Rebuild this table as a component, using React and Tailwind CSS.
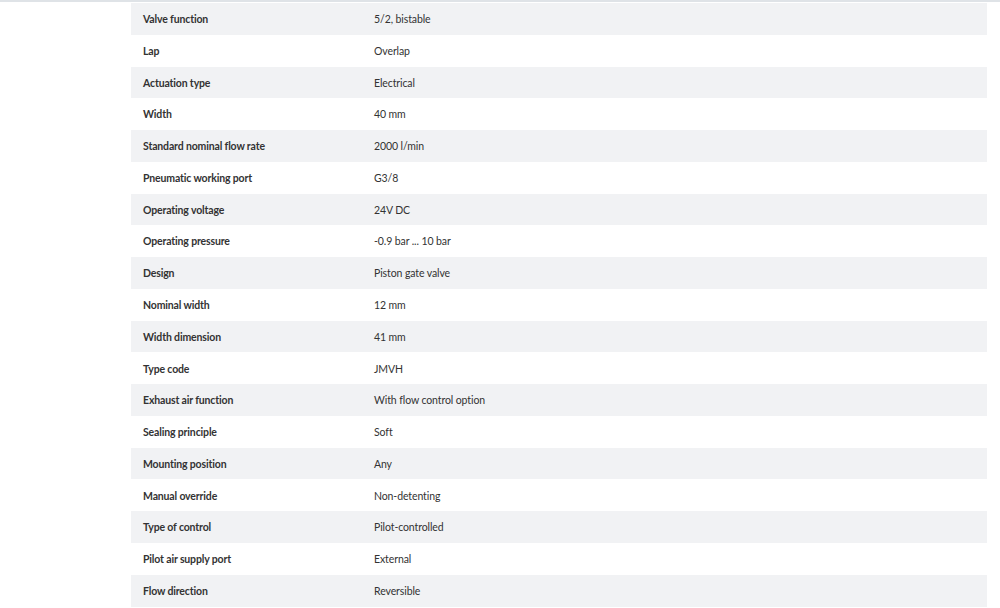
import React from 'react';

const specs = [
  ['Valve function', '5/2, bistable'],
  ['Lap', 'Overlap'],
  ['Actuation type', 'Electrical'],
  ['Width', '40 mm'],
  ['Standard nominal flow rate', '2000 l/min'],
  ['Pneumatic working port', 'G3/8'],
  ['Operating voltage', '24V DC'],
  ['Operating pressure', '-0.9 bar ... 10 bar'],
  ['Design', 'Piston gate valve'],
  ['Nominal width', '12 mm'],
  ['Width dimension', '41 mm'],
  ['Type code', 'JMVH'],
  ['Exhaust air function', 'With flow control option'],
  ['Sealing principle', 'Soft'],
  ['Mounting position', 'Any'],
  ['Manual override', 'Non-detenting'],
  ['Type of control', 'Pilot-controlled'],
  ['Pilot air supply port', 'External'],
  ['Flow direction', 'Reversible'],
];

const App = () => {
  return (
    <div className="min-h-screen bg-white font-['Lato','Liberation_Sans',sans-serif] text-[#333333]">
      <div className="h-[2px] bg-[#dfe3e7]" />
      <div className="pl-[131px] pr-[13px] pt-px">
        <table className="w-full border-collapse">
          <tbody>
            {specs.map(([label, value], i) => (
              <tr
                key={label}
                className={i % 2 === 0 ? 'h-[31.78px] bg-[#f1f2f4]' : 'h-[31.78px] bg-white'}
              >
                <td className="w-[231px] px-3 pt-[1px] pb-0 text-[10.5px] font-bold leading-none tracking-[-0.15px]">
                  {label}
                </td>
                <td className="px-3 pt-[1px] pb-0 text-[10.5px] leading-none tracking-[-0.1px]">
                  {value}
                </td>
              </tr>
            ))}
          </tbody>
        </table>
      </div>
    </div>
  );
};

export default App;
